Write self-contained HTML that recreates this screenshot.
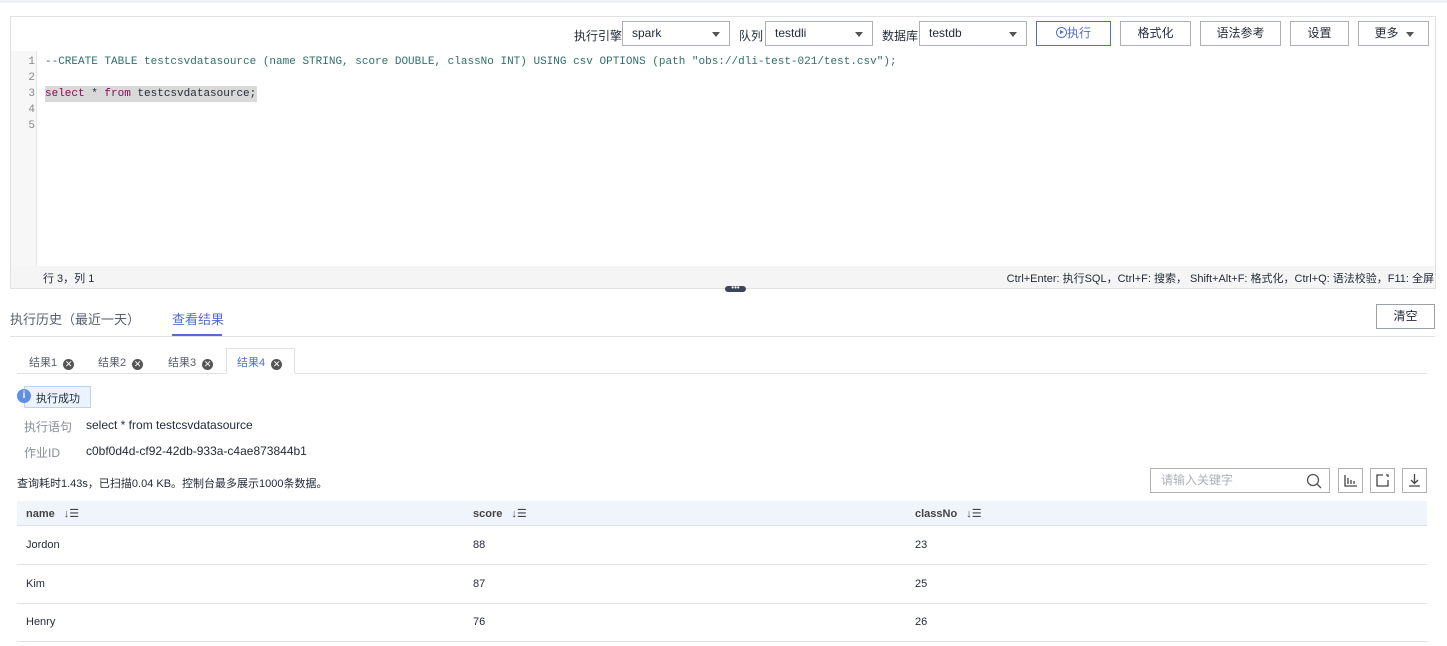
<!DOCTYPE html>
<html><head><meta charset="utf-8"><style>
*{box-sizing:border-box;margin:0;padding:0}
body{width:1447px;height:646px;background:#fff;font-family:"Liberation Sans","Noto Sans CJK SC",sans-serif;font-size:12px;color:#252b3a;position:relative;overflow:hidden}
.a{position:absolute}
.sel{border:1px solid #adb0b8;height:25px;background:#fff;padding:0 9px;line-height:23px;font-size:12px}
.sel:after{content:"";position:absolute;right:9px;top:10px;border-left:4px solid transparent;border-right:4px solid transparent;border-top:5px solid #555}
.btn{border:1px solid #adb0b8;height:25px;background:#fff;text-align:center;line-height:23px;font-size:12px}
.code{font-family:"Liberation Mono","DejaVu Sans Mono",monospace;font-size:11px;line-height:16px}
.ln{color:#888;text-align:right;width:24px}
.x{display:inline-block;width:11px;height:11px;border-radius:50%;background:#555;color:#fff;font-size:9px;line-height:11px;text-align:center;vertical-align:-1px;margin-left:6px}
.row{left:17px;width:1410px;height:39px;border-bottom:1px solid #dfe1e6}
.row span{position:absolute;top:13px;font-size:11px}
</style></head><body>
<div class="a" style="left:0;top:0;width:1447px;height:3px;background:#eef0f5"></div>
<div class="a" style="left:10px;top:16px;width:1426px;height:273px;border:1px solid #dfe1e6"></div>
<div class="a" style="left:574px;top:27px">执行引擎</div>
<div class="a sel" style="left:622px;top:21px;width:108px">spark</div>
<div class="a" style="left:739px;top:27px">队列</div>
<div class="a sel" style="left:765px;top:21px;width:108px">testdli</div>
<div class="a" style="left:882px;top:27px">数据库</div>
<div class="a sel" style="left:919px;top:21px;width:108px">testdb</div>
<div class="a btn" style="left:1036px;top:21px;width:75px;border-color:#526ecc;color:#526ecc"><span style="display:inline-block;width:11px;height:11px;border:1px solid #526ecc;border-radius:50%;vertical-align:-1px;position:relative"><span style="position:absolute;left:3px;top:2px;border-left:4px solid #526ecc;border-top:2.5px solid transparent;border-bottom:2.5px solid transparent"></span></span>执行</div>
<div class="a btn" style="left:1120px;top:21px;width:71px">格式化</div>
<div class="a btn" style="left:1200px;top:21px;width:81px">语法参考</div>
<div class="a btn" style="left:1290px;top:21px;width:59px">设置</div>
<div class="a btn" style="left:1358px;top:21px;width:71px;padding-right:14px">更多<span style="position:absolute;right:14px;top:10px;border-left:4px solid transparent;border-right:4px solid transparent;border-top:5px solid #555"></span></div>
<div class="a" style="left:11px;top:51px;width:26px;height:215px;background:#f7f7f7;border-right:1px solid #e5e5e5"></div>
<div class="a code ln" style="left:11px;top:54px">1<br>2<br>3<br>4<br>5</div>
<div class="a code" style="left:45px;top:54px;color:#2f6f6b;white-space:pre">--CREATE TABLE testcsvdatasource (name STRING, score DOUBLE, classNo INT) USING csv OPTIONS (path "obs://dli-test-021/test.csv");</div>
<div class="a code" style="left:45px;top:86px;background:#d9d9d9;padding-right:1px;white-space:pre"><span style="color:#8b0a50">select</span> * <span style="color:#8b0a50">from</span> testcsvdatasource;</div>
<div class="a" style="left:11px;top:266px;width:1424px;height:22px;background:#f5f5f5"></div>
<div class="a" style="left:43px;top:270px;font-size:11px">行 3，列 1</div>
<div class="a" style="right:13px;top:270px;font-size:11px">Ctrl+Enter: 执行SQL，Ctrl+F: 搜索， Shift+Alt+F: 格式化，Ctrl+Q: 语法校验，F11: 全屏</div>
<div class="a" style="left:725px;top:286px;width:21px;height:6px;background:#3d4558;border-radius:3px;color:#fff;font-size:8px;line-height:3px;text-align:center">•••</div>
<div class="a" style="left:10px;top:309px;font-size:13px;color:#575d6c">执行历史（最近一天）</div>
<div class="a" style="left:172px;top:309px;font-size:13px;color:#526ecc">查看结果</div>
<div class="a" style="left:172px;top:334px;width:50px;height:2px;background:#526ecc"></div>
<div class="a" style="left:10px;top:336px;width:1425px;height:1px;background:#dfe1e6"></div>
<div class="a btn" style="left:1376px;top:304px;width:59px;border-color:#9ca0a8">清空</div>
<div class="a" style="left:17px;top:373px;width:1410px;height:1px;background:#dfe1e6"></div>
<div class="a" style="left:29px;top:354px;font-size:11px;color:#575d6c">结果1<span class="x">✕</span></div>
<div class="a" style="left:98px;top:354px;font-size:11px;color:#575d6c">结果2<span class="x">✕</span></div>
<div class="a" style="left:168px;top:354px;font-size:11px;color:#575d6c">结果3<span class="x">✕</span></div>
<div class="a" style="left:226px;top:348px;width:69px;height:26px;border:1px solid #dfe1e6;border-bottom:1px solid #fff;background:#fff"></div>
<div class="a" style="left:237px;top:354px;font-size:11px;color:#526ecc">结果4<span class="x">✕</span></div>
<div class="a" style="left:24px;top:386px;width:67px;height:22px;background:#eaf3ff;border:1px solid #b8d4f8"></div>
<div class="a" style="left:17px;top:389px;width:14px;height:14px;border-radius:50%;background:#5f8fe6;color:#fff;font-size:10px;font-weight:bold;text-align:center;line-height:14px">i</div>
<div class="a" style="left:36px;top:390px;font-size:11px">执行成功</div>
<div class="a" style="left:24px;top:418px;color:#8a8e99">执行语句</div>
<div class="a" style="left:86px;top:418px">select * from testcsvdatasource</div>
<div class="a" style="left:24px;top:444px;color:#8a8e99">作业ID</div>
<div class="a" style="left:86px;top:444px">c0bf0d4d-cf92-42db-933a-c4ae873844b1</div>
<div class="a" style="left:17px;top:475px;font-size:11px">查询耗时1.43s，已扫描0.04 KB。控制台最多展示1000条数据。</div>
<div class="a" style="left:1150px;top:468px;width:180px;height:25px;border:1px solid #adb0b8;padding-left:10px;line-height:23px;color:#adb0b8">请输入关键字</div>
<svg class="a" style="left:1305px;top:472px" width="18" height="18" viewBox="0 0 18 18"><circle cx="8" cy="8" r="5.5" fill="none" stroke="#555" stroke-width="1.3"/><path d="M12 12l4 4" stroke="#555" stroke-width="1.3"/></svg>
<div class="a" style="left:1338px;top:468px;width:25px;height:25px;border:1px solid #adb0b8"><svg width="23" height="23"><path d="M6 6v11h12M9 9v6M12 11v4M15 12v3" stroke="#444" stroke-width="1.3" fill="none"/></svg></div>
<div class="a" style="left:1370px;top:468px;width:25px;height:25px;border:1px solid #adb0b8"><svg width="23" height="23"><path d="M12 6H6v11h11v-6M15 6h2v2" stroke="#444" stroke-width="1.3" fill="none"/></svg></div>
<div class="a" style="left:1402px;top:468px;width:25px;height:25px;border:1px solid #adb0b8"><svg width="23" height="23"><path d="M11.5 5v9M8 11l3.5 3.5 3.5-3.5M6 17h11" stroke="#444" stroke-width="1.3" fill="none"/></svg></div>
<div class="a" style="left:17px;top:501px;width:1410px;height:25px;background:#f0f4fb;border-bottom:1px solid #dfe1e6"></div>
<div class="a" style="left:26px;top:507px;font-size:11px;font-weight:bold;color:#444">name <span style="font-weight:normal;margin-left:6px">↓☰</span></div>
<div class="a" style="left:473px;top:507px;font-size:11px;font-weight:bold;color:#444">score <span style="font-weight:normal;margin-left:6px">↓☰</span></div>
<div class="a" style="left:915px;top:507px;font-size:11px;font-weight:bold;color:#444">classNo <span style="font-weight:normal;margin-left:6px">↓☰</span></div>
<div class="a row" style="top:526px"><span style="left:9px">Jordon</span><span style="left:456px">88</span><span style="left:898px">23</span></div>
<div class="a row" style="top:565px"><span style="left:9px">Kim</span><span style="left:456px">87</span><span style="left:898px">25</span></div>
<div class="a row" style="top:603px"><span style="left:9px">Henry</span><span style="left:456px">76</span><span style="left:898px">26</span></div>
</body></html>
